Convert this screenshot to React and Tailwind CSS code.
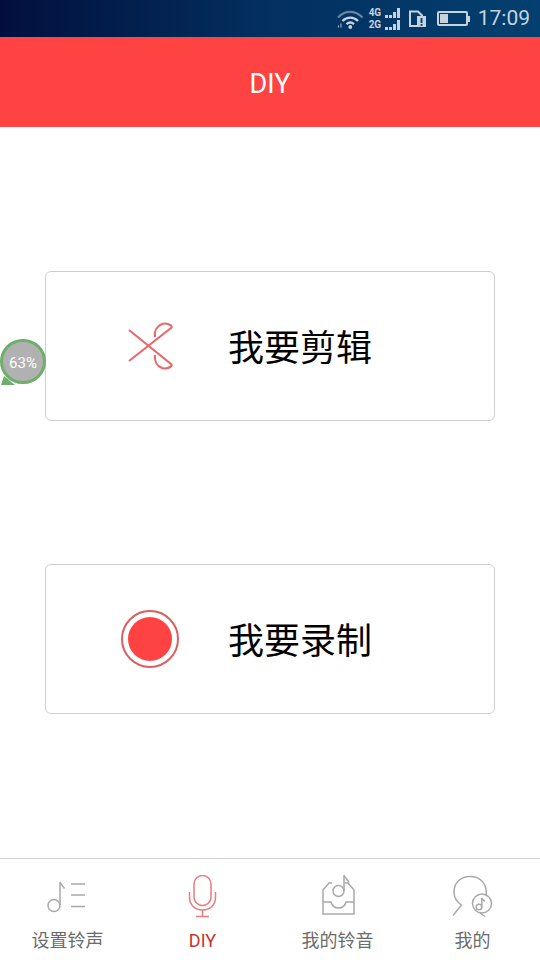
import React from 'react';

const font = { sans: 'font-["Roboto","Noto_Sans_CJK_SC",sans-serif]' };

const SignalRow = ({ label }) => (
  <div className="flex items-end h-[11px]">
    <span className="text-[10px] leading-[10px] font-bold w-[17px] tracking-[-0.3px]">{label}</span>
    <div className="flex items-end gap-[1.500px]">
      <span className="w-[2.500px] h-[3px] bg-current" />
      <span className="w-[2.500px] h-[3px] bg-current" />
      <span className="w-[2.500px] h-[6px] bg-current" />
      <span className="w-[2.500px] h-[10px] bg-current" />
    </div>
  </div>
);

const StatusBar = () => (
  <div className="h-[37px] shrink-0 flex items-center justify-end bg-gradient-to-r from-[#020f3e] via-[#03305f] to-[#03406f] text-[#c5d3de]">
    {/* wifi */}
    <svg width="28" height="20" viewBox="0 0 28 20" fill="none" stroke="currentColor" className="mt-[1px]">
      <path d="M2 8.500C9 1 19 1 26.500 8.500" strokeWidth="2.200" opacity="0.5" />
      <path d="M6.500 12C11 7.500 17.500 7.500 22 12" strokeWidth="2.400" />
      <path d="M10.500 15.200C13 13 15.500 13 18 15.200" strokeWidth="2.400" />
      <circle cx="14.300" cy="18" r="1.900" fill="currentColor" stroke="none" />
      <path d="M2.500 16.500v2M5 14.500v4" strokeWidth="1.200" opacity="0.8" />
    </svg>
    <div className="ml-[5px] w-[31px] flex flex-col gap-[1px] mt-[-1px]">
      <SignalRow label="4G" />
      <SignalRow label="2G" />
    </div>
    {/* sim */}
    <svg width="18" height="18" viewBox="0 0 18 18" className="ml-[9px]">
      <path d="M1 1.500h8l4 4V16H1z" fill="none" stroke="currentColor" strokeWidth="2" />
      <rect x="8" y="6" width="9" height="11" fill="currentColor" />
      <rect x="11.600" y="8" width="1.800" height="5" fill="#03376a" />
      <rect x="11.600" y="14" width="1.800" height="1.800" fill="#03376a" />
    </svg>
    {/* battery */}
    <div className="ml-[10px] flex items-center">
      <div className="w-[31px] h-[15px] border-2 border-current rounded-[2px] p-[1px]">
        <div className="w-[8px] h-full bg-current" />
      </div>
      <div className="w-[2px] h-[6px] bg-current" />
    </div>
    <span className="ml-[8px] mr-[10px] text-[21px] leading-none text-[#c5d3de]">17:09</span>
  </div>
);

const NavNote = () => (
  <svg width="44" height="44" viewBox="0 0 44 44" fill="none" stroke="#a9a9a9" strokeWidth="1.500">
    <circle cx="8" cy="30.500" r="6" />
    <path d="M14 30V7c1 3 3 4 4.500 6.500" />
    <path d="M25 9h14M25 20h14M25 31.500h14" />
  </svg>
);

const NavMic = () => (
  <svg width="44" height="44" viewBox="0 0 44 44" fill="none" stroke="#ea7a7c" strokeWidth="1.500">
    <rect x="13" y="0.500" width="17" height="30" rx="8.500" />
    <path d="M8.500 17v5c0 8 5.500 13 13 13s13-5 13-13v-5" />
    <path d="M21.500 35v6.500M15 41.500h13" />
  </svg>
);

const NavBox = () => (
  <svg width="44" height="44" viewBox="0 0 44 44" fill="none" stroke="#a9a9a9" strokeWidth="1.500">
    <path d="M16 8h-3l-6 7v24h31V15l-6-7h-3" />
    <path d="M7 27h8c1 4 3.500 6 7.500 6s6.500-2 7.500-6h8" />
    <circle cx="22.500" cy="16" r="5.500" />
    <path d="M28 16V0c1 3.500 3.500 4 5 7.500" />
  </svg>
);

const NavUser = () => (
  <svg width="44" height="44" viewBox="0 0 44 44" fill="none" stroke="#a9a9a9" strokeWidth="1.500">
    <path d="M35 21C37 10 30 1.500 19 1.500 9 1.500 3 8.500 3 17c0 6 3 10 7.500 13L2 40.500" />
    <path d="M29 38l5 3.500" />
    <circle cx="31" cy="28.500" r="9.500" />
    <circle cx="28" cy="32" r="2.800" />
    <path d="M30.800 32V23c.7 1.500 2 2.200 3 3.500" />
  </svg>
);

const tabs = [
  { label: '设置铃声', Icon: NavNote },
  { label: 'DIY', Icon: NavMic, active: true },
  { label: '我的铃音', Icon: NavBox },
  { label: '我的', Icon: NavUser },
];

const ActionCard = ({ icon, label }) => (
  <div className="h-[150px] rounded-[6px] border border-[#cfcfcf] bg-white flex items-center">
    <div className="w-[182px] pl-[75px] shrink-0 flex">{icon}</div>
    <span className="mt-[6px] text-[36px] leading-none text-black">{label}</span>
  </div>
);

export default function App() {
  return (
    <div className={`relative w-[540px] h-[960px] bg-white overflow-hidden flex flex-col ${font.sans}`}>
      <StatusBar />

      <div className="h-[90px] shrink-0 bg-[#ff4343] flex items-center justify-center pt-[5px] text-white text-[27px]">
        DIY
      </div>

      <div className="flex-1 px-[45px] pt-[144px] flex flex-col gap-[143px]">
        <ActionCard
          label="我要剪辑"
          icon={
            <svg width="58" height="60" viewBox="0 0 58 60" fill="none" stroke="#e86a6c" strokeWidth="2.200">
              <path d="M8 14L50 48c1 1 1 1.500 0 2.500-3 2-6 2.500-9 1.500-5-2-8-7-7-13" />
              <path d="M8 45L50 12c1-1 1-1.500 0-2.500-3-2-6-2.500-9-1.500-5 2-8 7-7 13" />
            </svg>
          }
        />
        <ActionCard
          label="我要录制"
          icon={
            <div className="w-[58px] h-[58px] rounded-full border-2 border-[#d9605f] flex items-center justify-center">
              <div className="w-[44px] h-[44px] rounded-full bg-[#ff4343]" />
            </div>
          }
        />
      </div>

      <div className="h-[102px] shrink-0 border-t border-[#cfcfcf] grid grid-cols-[135px_135px_135px_135px] pt-[16px]">
        {tabs.map(({ label, Icon, active }) => (
          <div key={label} className="flex flex-col items-center">
            <Icon />
            <span className={`mt-[10px] text-[18px] leading-[24px] ${active ? 'text-[#c9322f]' : 'text-[#6b6b6b]'}`}>
              {label}
            </span>
          </div>
        ))}
      </div>

      {/* floating speed bubble */}
      <svg width="16" height="10" viewBox="0 0 16 10" className="absolute left-0 top-[376px]">
        <path d="M4 0L1 9h14z" fill="#6fae6c" />
      </svg>
      <div className="absolute left-0 top-[339px] w-[46px] h-[45px] rounded-full border-[3px] border-[#6fae6c] bg-[#b1b1b1] flex items-center justify-center pt-[3px] text-white text-[15px]">
        63%
      </div>
    </div>
  );
}
